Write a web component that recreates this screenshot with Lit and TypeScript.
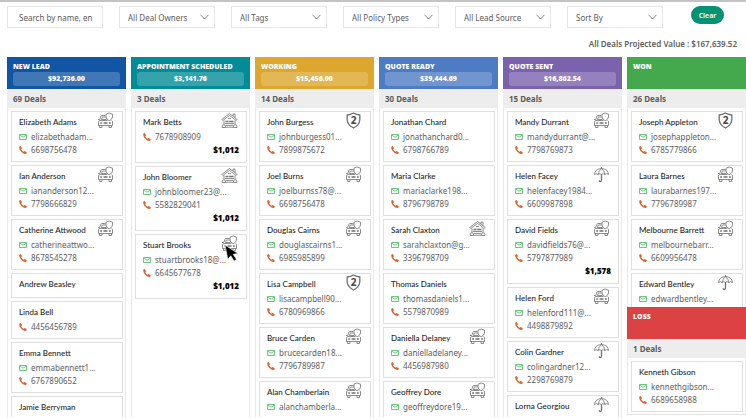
import { LitElement, html, css, svg, nothing } from "lit";
import { customElement, property } from "lit/decorators.js";
import { classMap } from "lit/directives/class-map.js";

type Policy = "car" | "home" | "shield" | "umbrella";

interface Deal {
  name: string;
  email?: string;
  phone?: string;
  amount?: string;
  policy?: Policy;
  pointer?: boolean;
}

interface Stage {
  title: string;
  tone: string;
  total?: string;
  count: number;
  deals: Deal[];
}

const policyArt = {
  car: svg`
    <path d="M8.500 3.500H5Q4.200 3.500 3.900 4.300L2.800 7.500M8.800 5H5.300L4.500 7.500H9.500M10.500 8.500H2.800Q1.500 8.700 1.500 10V13.500H15.500V10Q15.500 8.900 14.500 8.500M1 7.500H2.800M2.500 13.500V15.500H5V13.500M12 13.500V15.500H14.500V13.500"/>
    <path class="heavy" d="M3.200 11H5M6.500 11H10.500M12 11H13.800"/>
    <path class="fill" d="M12.200 1L15.500 2.200V5Q15.300 7.400 12.200 8.800Q9.100 7.400 9 5V2.200Z"/>`,
  home: svg`
    <path d="M.8 7.500L8.500 1.500L16.200 7.500L15.200 8.500L8.500 3.400L1.800 8.500ZM12 4V2H14V5.500M3 8.500V12.500M14 8.500V12.500M1 15.500Q.5 12.800 3 12.600Q4.600 12.800 4.700 15.500ZM12.300 15.500Q12.400 12.800 14 12.600Q16.500 12.800 16 15.500ZM4.700 15.200H12.300M4.700 13.400H12.300M7 6.500H10"/>
    <path class="heavy" d="M4.500 9.500H7.500M8.200 9.500H12.500"/>
    <path d="M4 11.500H13"/>`,
  shield: svg`
    <path class="thick" d="M8.500 1Q11.500 2.800 14.800 3V8Q14.300 13 8.500 16Q2.700 13 2.200 8V3Q5.500 2.800 8.500 1Z"/>
    <text x="8.500" y="12" text-anchor="middle">2</text>`,
  umbrella: svg`
    <path d="M8.500 2.500V1M1.500 8.500Q2 3 8.500 2.500Q15 3 15.500 8.500Q13.500 6.800 11.800 8.500Q10 6.800 8.500 8.500Q7 6.800 5.200 8.500Q3.500 6.800 1.500 8.500ZM8.500 2.500Q5.500 5 5.200 8.500M8.500 2.500Q11.500 5 11.800 8.500"/>
    <path class="thick" d="M8.500 8.500V14Q8.500 15.500 7.300 15.500Q6.200 15.500 6.200 14.200"/>`,
};

const filters = ["All Deal Owners", "All Tags", "All Policy Types", "All Lead Source", "Sort By"];

const stages: Stage[] = [
  {
    title: "NEW LEAD", tone: "blue", total: "$92,736.00", count: 69,
    deals: [
      { name: "Elizabeth Adams", email: "elizabethadam...", phone: "6698756478", policy: "car" },
      { name: "Ian Anderson", email: "iananderson12...", phone: "7798666829", policy: "car" },
      { name: "Catherine Attwood", email: "catherineattwo...", phone: "8678545278", policy: "car" },
      { name: "Andrew Beasley" },
      { name: "Linda Bell", phone: "4456456789" },
      { name: "Emma Bennett", email: "emmabennett1...", phone: "6767890652" },
      { name: "Jamie Berryman" },
    ],
  },
  {
    title: "APPOINTMENT SCHEDULED", tone: "teal", total: "$3,141.76", count: 3,
    deals: [
      { name: "Mark Betts", phone: "7678908909", amount: "$1,012", policy: "home" },
      { name: "John Bloomer", email: "johnbloomer23@...", phone: "5582829041", amount: "$1,012", policy: "home" },
      { name: "Stuart Brooks", email: "stuartbrooks18@...", phone: "6645677678", amount: "$1,012", policy: "car", pointer: true },
    ],
  },
  {
    title: "WORKING", tone: "amber", total: "$15,456.00", count: 14,
    deals: [
      { name: "John Burgess", email: "johnburgess01...", phone: "7899875672", policy: "shield" },
      { name: "Joel Burns", email: "joelburnss78@...", phone: "6698756478", policy: "car" },
      { name: "Douglas Cairns", email: "douglascairns1...", phone: "6985985899", policy: "car" },
      { name: "Lisa Campbell", email: "lisacampbell90...", phone: "6780969866", policy: "shield" },
      { name: "Bruce Carden", email: "brucecarden18...", phone: "7796789987", policy: "car" },
      { name: "Alan Chamberlain", email: "alanchamberla...", policy: "car" },
    ],
  },
  {
    title: "QUOTE READY", tone: "sky", total: "$39,444.69", count: 30,
    deals: [
      { name: "Jonathan Chard", email: "jonathanchard0...", phone: "6798766789" },
      { name: "Maria Clarke", email: "mariaclarke198...", phone: "8796798789" },
      { name: "Sarah Claxton", email: "sarahclaxton@g...", phone: "3396798709", policy: "home" },
      { name: "Thomas Daniels", email: "thomasdaniels1...", phone: "5579870989" },
      { name: "Daniella Delaney", email: "danielladelaney...", phone: "4456987980", policy: "car" },
      { name: "Geoffrey Dore", email: "geoffreydore19...", policy: "car" },
    ],
  },
  {
    title: "QUOTE SENT", tone: "violet", total: "$16,862.54", count: 15,
    deals: [
      { name: "Mandy Durrant", email: "mandydurrant@...", phone: "7798769873", policy: "car" },
      { name: "Helen Facey", email: "helenfacey1984...", phone: "6609987898", policy: "umbrella" },
      { name: "David Fields", email: "davidfields76@...", phone: "5797877989", amount: "$1,578", policy: "car" },
      { name: "Helen Ford", email: "helenford111@...", phone: "4498879892", policy: "car" },
      { name: "Colin Gardner", email: "colingardner12...", phone: "2298769879", policy: "umbrella" },
      { name: "Lorna Georgiou", policy: "umbrella" },
    ],
  },
];

const won: Stage = {
  title: "WON", tone: "green", count: 26,
  deals: [
    { name: "Joseph Appleton", email: "josephappleton...", phone: "6785779866", policy: "shield" },
    { name: "Laura Barnes", email: "laurabarnes197...", phone: "7796789987", policy: "car" },
    { name: "Melbourne Barrett", email: "melbournebarr...", phone: "6609956478", policy: "car" },
    { name: "Edward Bentley", email: "edwardbentley...", policy: "umbrella" },
  ],
};

const loss: Stage = {
  title: "LOSS", tone: "red", count: 1,
  deals: [{ name: "Kenneth Gibson", email: "kennethgibson...", phone: "6689658988" }],
};

@customElement("deal-card")
class DealCard extends LitElement {
  @property({ attribute: false }) deal!: Deal;

  static styles = css`
    :host { display: block; flex: none; }
    .card {
      position: relative;
      padding: 4px 7px 5px;
      border: 1px solid #dfdfdf;
      background: #fff;
    }
    .name {
      margin: 0 0 2px;
      font: 500 8px/12px Lato, sans-serif;
      color: #262626;
      white-space: nowrap;
    }
    .line {
      display: flex;
      align-items: center;
      gap: 4px;
      font-size: 8px;
      line-height: 13px;
      color: #606060;
      white-space: nowrap;
    }
    .glyph { flex: none; width: 8px; height: 8px; }
    .mail { fill: none; stroke: #5cc070; stroke-width: 0.9; }
    .tel { fill: #d9622f; }
    .amount {
      font: 800 8px/14px "Open Sans", sans-serif;
      color: #000;
      text-align: right;
    }
    .policy {
      position: absolute;
      top: 0;
      right: 8px;
      width: 17px;
      height: 17px;
      fill: none;
      stroke: #707070;
      stroke-width: 0.8;
    }
    .policy .thick { stroke-width: 1.3; }
    .policy .heavy { stroke-width: 1.6; }
    .policy .fill { fill: #fff; }
    .policy text {
      font: 700 10px "Noto Sans", sans-serif;
      fill: #444;
      stroke: none;
    }
    .pointer {
      position: absolute;
      top: 9px;
      right: 7px;
      width: 15px;
      height: 18px;
      fill: #000;
      stroke: #fff;
      stroke-width: 0.6;
    }
  `;

  render() {
    const d = this.deal;
    return html`
      <article class="card">
        <h3 class="name">${d.name}</h3>
        ${d.email
          ? html`<div class="line">
              <svg class="glyph mail" viewBox="0 0 8 8" aria-hidden="true"><path d="M.5 1.500H7.500V6.500H.5ZM.8 2.200L4 4.200L7.200 2.200" /></svg>
              <span>${d.email}</span>
            </div>`
          : nothing}
        ${d.phone
          ? html`<div class="line">
              <svg class="glyph tel" viewBox="0 0 8 8" aria-hidden="true"><path d="M.2 1Q.8 .1 1.700 .1L3 2.100L2.200 3.200Q2.900 4.800 4.600 5.700L5.600 5L7.800 6.200Q7.700 7.300 6.900 7.900Q4.800 8.200 2.500 6Q0 3.600 .2 1Z" /></svg>
              <span>${d.phone}</span>
            </div>`
          : nothing}
        ${d.amount ? html`<div class="amount">${d.amount}</div>` : nothing}
        ${d.policy
          ? html`<svg class="policy" viewBox="0 0 17 17" aria-hidden="true">${policyArt[d.policy]}</svg>`
          : nothing}
        ${d.pointer
          ? html`<svg class="pointer" viewBox="0 0 15 18" aria-hidden="true"><path d="M1 1L14 9.500L9.200 10.300L12.500 15.500L10 17L6.800 11.800L3.800 15.200Z" /></svg>`
          : nothing}
      </article>
    `;
  }
}

@customElement("deal-stage")
class DealStage extends LitElement {
  @property({ attribute: false }) stage!: Stage;

  static styles = css`
    :host { display: flex; flex-direction: column; min-width: 0; }
    .head {
      flex: none;
      box-sizing: border-box;
      height: 32px;
      padding: 4px 6px 3px;
      color: #fff;
      font: 800 7px/11px "Open Sans", sans-serif;
    }
    .title { margin: 0; font: inherit; white-space: nowrap; }
    .total {
      border-radius: 3px;
      background: rgba(255, 255, 255, 0.2);
      line-height: 14px;
      text-align: center;
    }
    .blue { background: #1155a5; }
    .teal { background: #028c98; }
    .amber { background: #dda62c; }
    .sky { background: #4d7bc4; }
    .violet { background: #7b62ad; }
    .green { background: #44a94c; }
    .red { background: #dc4144; }
    .count {
      flex: none;
      padding: 0 6px;
      background: #ededed;
      color: #5c5c5c;
      font-size: 8px;
      font-weight: 700;
      line-height: 19px;
    }
    .deals {
      flex: 1 1 auto;
      min-height: 0;
      display: flex;
      flex-direction: column;
      gap: 3px;
      overflow: hidden;
      padding: 3px 2px 2px 3px;
      border: solid #e9e9e9;
      border-width: 0 1px;
    }
  `;

  render() {
    const s = this.stage;
    return html`
      <header class=${classMap({ head: true, [s.tone]: true })}>
        <h2 class="title">${s.title}</h2>
        ${s.total ? html`<div class="total">${s.total}</div>` : nothing}
      </header>
      <div class="count">${s.count} Deals</div>
      <div class="deals">${s.deals.map((d) => html`<deal-card .deal=${d}></deal-card>`)}</div>
    `;
  }
}

@customElement("app-root")
class AppRoot extends LitElement {
  static styles = css`
    :host {
      display: flex;
      flex-direction: column;
      box-sizing: border-box;
      height: 100vh;
      padding-bottom: 3px;
      border-top: 2px solid #c4c4c4;
      overflow: hidden;
      background: #fff;
      font-family: "Noto Sans", sans-serif;
    }
    .filters {
      display: grid;
      grid-template-columns: repeat(6, minmax(0, 1fr)) auto;
      gap: 16px;
      padding: 4px 22px 0 7px;
    }
    .field { position: relative; display: block; }
    .control {
      display: block;
      box-sizing: border-box;
      width: 100%;
      height: 22px;
      margin: 0;
      padding: 0 8px;
      border: 1px solid #e6e6e6;
      border-radius: 0;
      appearance: none;
      background: #fff;
      color: #5c5c5c;
      font: 8px "Noto Sans", sans-serif;
    }
    .search { padding: 0 8px 0 11px; }
    .search::placeholder { color: #5c5c5c; opacity: 1; }
    .chevron {
      position: absolute;
      top: 8px;
      right: 6px;
      width: 9px;
      height: 6px;
      fill: none;
      stroke: #888;
      pointer-events: none;
    }
    .clear {
      width: 33px;
      height: 18px;
      margin: 0 0 0 12px;
      padding: 0;
      border: 0;
      border-radius: 9px;
      background: #049274;
      color: #fff;
      font: 600 7px "Noto Sans", sans-serif;
    }
    .summary {
      margin: 0;
      padding: 10px 9px 7px;
      color: #606060;
      font-size: 8px;
      font-weight: 600;
      line-height: 12px;
      text-align: right;
    }
    .board {
      flex: 1;
      min-height: 0;
      display: grid;
      grid-template-columns: repeat(6, minmax(0, 1fr));
      grid-template-rows: minmax(0, 1fr);
      gap: 5px;
      padding-left: 7px;
    }
    .closed { display: flex; flex-direction: column; min-width: 0; }
    .won { flex: 1; min-height: 0; }
    .loss { flex: none; margin-bottom: 2px; border-bottom: 1px solid #e3e3e3; }
  `;

  render() {
    return html`
      <form class="filters" @submit=${(e: Event) => e.preventDefault()}>
        <input class="control search" type="text" aria-label="Search" placeholder="Search by name, en" />
        ${filters.map(
          (f) => html`<label class="field">
            <select class="control" aria-label=${f}><option>${f}</option></select>
            <svg class="chevron" viewBox="0 0 9 6" aria-hidden="true"><path d="M.5 .8L4.500 5L8.500 .8" /></svg>
          </label>`
        )}
        <button class="clear" type="reset">Clear</button>
      </form>
      <p class="summary">All Deals Projected Value : $167,639.52</p>
      <main class="board">
        ${stages.map((s) => html`<deal-stage .stage=${s}></deal-stage>`)}
        <div class="closed">
          <deal-stage class="won" .stage=${won}></deal-stage>
          <deal-stage class="loss" .stage=${loss}></deal-stage>
        </div>
      </main>
    `;
  }
}
